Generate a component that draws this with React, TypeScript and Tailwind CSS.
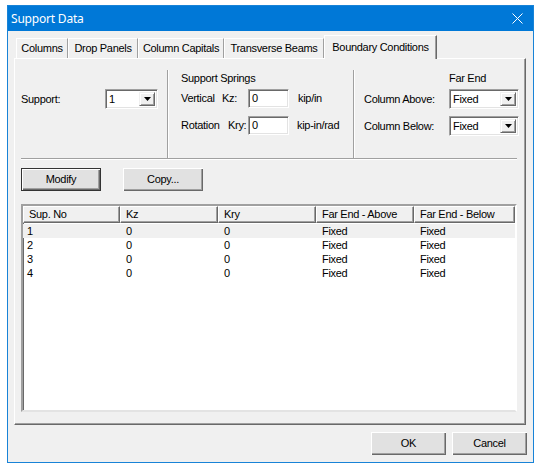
import type { ReactNode } from "react";

const rows = [
  { no: "1", kz: "0", kry: "0", above: "Fixed", below: "Fixed" },
  { no: "2", kz: "0", kry: "0", above: "Fixed", below: "Fixed" },
  { no: "3", kz: "0", kry: "0", above: "Fixed", below: "Fixed" },
  { no: "4", kz: "0", kry: "0", above: "Fixed", below: "Fixed" },
];

const colWidths = ["w-[97px]", "w-[98px]", "w-[98px]", "w-[98px]", "w-[101px]"];
const headers = ["Sup. No", "Kz", "Kry", "Far End - Above", "Far End - Below"];

// sunken 3d edge used for edit boxes and combos
const sunken =
  "border border-t-[#a0a0a0] border-l-[#a0a0a0] border-r-white border-b-white shadow-[inset_1px_1px_0_#696969,inset_-1px_-1px_0_#e3e3e3]";

function Combo({ value, width }: { value: string; width: string }) {
  return (
    <div className={`${width} shrink-0 h-[20px] bg-white flex items-center ${sunken} p-[2px]`}>
      <span className="flex-1 pl-[1px] leading-none">{value}</span>
      <div className="w-[16px] h-full bg-[#f0f0f0] flex items-center justify-center border border-t-[#f0f0f0] border-l-[#f0f0f0] border-r-[#696969] border-b-[#696969] shadow-[inset_1px_1px_0_#fff,inset_-1px_-1px_0_#a0a0a0]">
        <svg width="7" height="4" viewBox="0 0 7 4">
          <path d="M0 0h7L3.5 4z" fill="#000" />
        </svg>
      </div>
    </div>
  );
}

function Edit({ value }: { value: string }) {
  return (
    <div className={`w-[41px] shrink-0 h-[19px] bg-white flex items-center pl-[3px] ${sunken}`}>
      {value}
    </div>
  );
}

function Button({ children, isDefault, width }: { children: ReactNode; isDefault?: boolean; width: string }) {
  return (
    <div
      className={`${width} h-[23px] flex items-center justify-center bg-[#e1e1e1] ${
        isDefault
          ? "border border-[#333] shadow-[inset_1px_1px_0_#fff,inset_-1px_-1px_0_#696969,inset_-2px_-2px_0_#a0a0a0]"
          : "shadow-[inset_1px_1px_0_#fff,inset_-1px_-1px_0_#696969,inset_-2px_-2px_0_#a0a0a0]"
      }`}
    >
      {children}
    </div>
  );
}

function Tab({ label, width }: { label: string; width: string }) {
  return (
    <div
      className={`${width} h-[20px] flex items-center justify-center border-t border-l border-t-white border-l-white border-r border-r-[#a0a0a0]`}
    >
      {label}
    </div>
  );
}

export default function App() {
  return (
    <div
      className="w-[540px] h-[469px] bg-white pl-[7px] pt-[5px] text-[11px] tracking-[-0.3px] text-black"
      style={{ fontFamily: '"Liberation Sans", Arial, sans-serif' }}
    >
      <div className="w-[527px] h-[458px] border border-[#1883d7] bg-[#f0f0f0] flex flex-col">
        {/* title bar */}
        <div className="h-[25px] bg-[#0078d7] flex items-center pl-[3px] pr-[10px] text-white shrink-0">
          <span className="flex-1 text-[12px] tracking-[-0.2px]" style={{ fontFamily: '"Noto Sans", sans-serif' }}>
            Support Data
          </span>
          <svg width="11" height="11" viewBox="0 0 11 11">
            <path d="M0.5 0.5l10 10M10.5 0.5l-10 10" stroke="#fff" strokeWidth="1" />
          </svg>
        </div>

        <div className="flex-1 flex flex-col pt-[4px] px-[6px]">
          {/* tabs */}
          <div className="h-[23px] flex items-end pl-[2px]">
            <Tab label="Columns" width="w-[52px]" />
            <Tab label="Drop Panels" width="w-[70px]" />
            <Tab label="Column Capitals" width="w-[86px]" />
            <Tab label="Transverse Beams" width="w-[100px]" />
            <div className="relative z-10 w-[113px] h-[24px] -mb-[1px] bg-[#f0f0f0] flex items-start justify-center pt-[3px] border-t border-l border-t-white border-l-white border-r border-r-[#696969] shadow-[inset_-1px_0_0_#a0a0a0]">
              Boundary Conditions
            </div>
          </div>

          {/* tab page */}
          <div className="w-[512px] h-[367px] border border-t-white border-l-white border-r-[#696969] border-b-[#696969] shadow-[inset_-1px_-1px_0_#a0a0a0] flex flex-col">
            <div className="ml-[6px] mt-[11px] w-[496px] h-[89px] flex border-b border-b-[#a0a0a0] shadow-[0_1px_0_#fff]">
              <div className="w-[147px] shrink-0 border-r border-r-[#a0a0a0] shadow-[1px_0_0_#fff] pt-[19px]">
                <div className="flex items-center">
                  <span className="w-[84px]">Support:</span>
                  <Combo value="1" width="w-[53px]" />
                </div>
              </div>

              <div className="w-[186px] shrink-0 border-r border-r-[#a0a0a0] shadow-[1px_0_0_#fff] pl-[13px] pt-[2px]">
                <div className="h-[13px] leading-[13px]">Support Springs</div>
                <div className="flex items-center mt-[4px]">
                  <span className="w-[41px]">Vertical</span>
                  <span className="w-[26px]">Kz:</span>
                  <Edit value="0" />
                  <span className="ml-[9px]">kip/in</span>
                </div>
                <div className="flex items-center mt-[8px]">
                  <span className="w-[47px]">Rotation</span>
                  <span className="w-[20px]">Kry:</span>
                  <Edit value="0" />
                  <span className="ml-[8px]">kip-in/rad</span>
                </div>
              </div>

              <div className="flex-1 pl-[10px] pt-[2px]">
                <div className="h-[13px] leading-[13px] pl-[85px]">Far End</div>
                <div className="flex items-center mt-[4px]">
                  <span className="w-[85px] shrink-0">Column Above:</span>
                  <Combo value="Fixed" width="w-[70px]" />
                </div>
                <div className="flex items-center mt-[7px]">
                  <span className="w-[85px] shrink-0">Column Below:</span>
                  <Combo value="Fixed" width="w-[70px]" />
                </div>
              </div>
            </div>

            {/* action buttons */}
            <div className="flex ml-[6px] mt-[9px] gap-[22px]">
              <Button isDefault width="w-[80px]">Modify</Button>
              <Button width="w-[80px]">Copy...</Button>
            </div>

            {/* support list */}
            <div className="ml-[6px] mt-[13px] w-[496px] h-[208px] bg-white border-2 border-t-[#a0a0a0] border-l-[#a0a0a0] border-r-white border-b-[#e3e3e3] shadow-[inset_1px_1px_0_#696969] flex flex-col">
              <div className="flex h-[17px] shrink-0">
                {headers.map((h, i) => (
                  <div
                    key={h}
                    className={`${colWidths[i]} h-full flex items-center pl-[5px] bg-[#f0f0f0] border-t border-l border-t-white border-l-white border-r border-b border-r-[#696969] border-b-[#696969] shadow-[inset_-1px_-1px_0_#a0a0a0]`}
                  >
                    {h}
                  </div>
                ))}
              </div>
              <div className="mt-[1px]">
                {rows.map((r, idx) => (
                  <div key={r.no} className={`flex h-[14px] items-center ${idx === 0 ? "bg-[#f0f0f0]" : ""}`}>
                    <div className={`${colWidths[0]} pl-[4px]`}>{r.no}</div>
                    <div className={`${colWidths[1]} pl-[6px]`}>{r.kz}</div>
                    <div className={`${colWidths[2]} pl-[6px]`}>{r.kry}</div>
                    <div className={`${colWidths[3]} pl-[6px]`}>{r.above}</div>
                    <div className={`${colWidths[4]} pl-[6px]`}>{r.below}</div>
                  </div>
                ))}
              </div>
            </div>
          </div>

          {/* dialog buttons */}
          <div className="flex justify-end gap-[6px] mt-[7px]">
            <Button width="w-[75px]">OK</Button>
            <Button width="w-[75px]">Cancel</Button>
          </div>
        </div>
      </div>
    </div>
  );
}
